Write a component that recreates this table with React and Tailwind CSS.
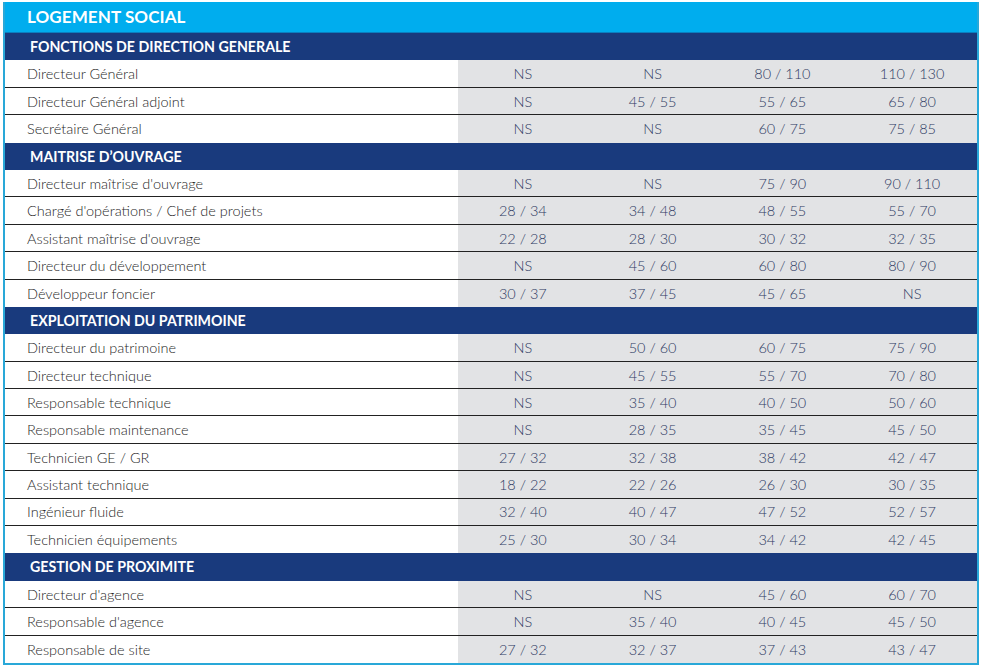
import React from "react";

const sections = [
  {
    title: "FONCTIONS DE DIRECTION GENERALE",
    rows: [
      ["Directeur Général", "NS", "NS", "80 / 110", "110 / 130"],
      ["Directeur Général adjoint", "NS", "45 / 55", "55 / 65", "65 / 80"],
      ["Secrétaire Général", "NS", "NS", "60 / 75", "75 / 85"],
    ],
  },
  {
    title: "MAITRISE D’OUVRAGE",
    rows: [
      ["Directeur maîtrise d'ouvrage", "NS", "NS", "75 / 90", "90 / 110"],
      ["Chargé d'opérations / Chef de projets", "28 / 34", "34 / 48", "48 / 55", "55 / 70"],
      ["Assistant maîtrise d'ouvrage", "22 / 28", "28 / 30", "30 / 32", "32 / 35"],
      ["Directeur du développement", "NS", "45 / 60", "60 / 80", "80 / 90"],
      ["Développeur foncier", "30 / 37", "37 / 45", "45 / 65", "NS"],
    ],
  },
  {
    title: "EXPLOITATION DU PATRIMOINE",
    rows: [
      ["Directeur du patrimoine", "NS", "50 / 60", "60 / 75", "75 / 90"],
      ["Directeur technique", "NS", "45 / 55", "55 / 70", "70 / 80"],
      ["Responsable technique", "NS", "35 / 40", "40 / 50", "50 / 60"],
      ["Responsable maintenance", "NS", "28 / 35", "35 / 45", "45 / 50"],
      ["Technicien GE / GR", "27 / 32", "32 / 38", "38 / 42", "42 / 47"],
      ["Assistant technique", "18 / 22", "22 / 26", "26 / 30", "30 / 35"],
      ["Ingénieur fluide", "32 / 40", "40 / 47", "47 / 52", "52 / 57"],
      ["Technicien équipements", "25 / 30", "30 / 34", "34 / 42", "42 / 45"],
    ],
  },
  {
    title: "GESTION DE PROXIMITE",
    rows: [
      ["Directeur d'agence", "NS", "NS", "45 / 60", "60 / 70"],
      ["Responsable d'agence", "NS", "35 / 40", "40 / 45", "45 / 50"],
      ["Responsable de site", "27 / 32", "32 / 37", "37 / 43", "43 / 47"],
    ],
  },
];

export default function App() {
  return (
    <div className="w-[984px] h-[671px] bg-white pt-[2px] pl-[3px]" style={{ fontFamily: "Lato, 'Open Sans', sans-serif" }}>
      <div className="w-[976px] border-x-2 border-b-2 border-[#29a8d8]">
        <div className="h-[31px] bg-[#00adee] flex items-center pl-[22px] border-b border-[#0b7fc0]">
          <span className="text-white font-bold text-[17px] tracking-[0.1px]">LOGEMENT SOCIAL</span>
        </div>
        {sections.map((s) => (
          <div key={s.title}>
            <div className="h-[27.4px] bg-[#193a7d] flex items-center pl-[25px]">
              <span className="text-white font-bold text-[14.2px]">{s.title}</span>
            </div>
            {s.rows.map((r, i) => (
              <div
                key={r[0]}
                className={
                  "h-[27.4px] grid grid-cols-[453px_repeat(4,1fr)] " +
                  (i < s.rows.length - 1 ? "border-b border-[#222]" : "")
                }
              >
                <div className="flex items-center pl-[22px] pt-[1px] text-[14.5px] font-light text-[#1f1f1f] bg-white">{r[0]}</div>
                {r.slice(1).map((v, j) => (
                  <div key={j} className="flex items-center justify-center pt-[1px] text-[14.5px] font-light text-[#2e3a63] bg-[#e2e3e5]">
                    {v}
                  </div>
                ))}
              </div>
            ))}
          </div>
        ))}
      </div>
    </div>
  );
}
